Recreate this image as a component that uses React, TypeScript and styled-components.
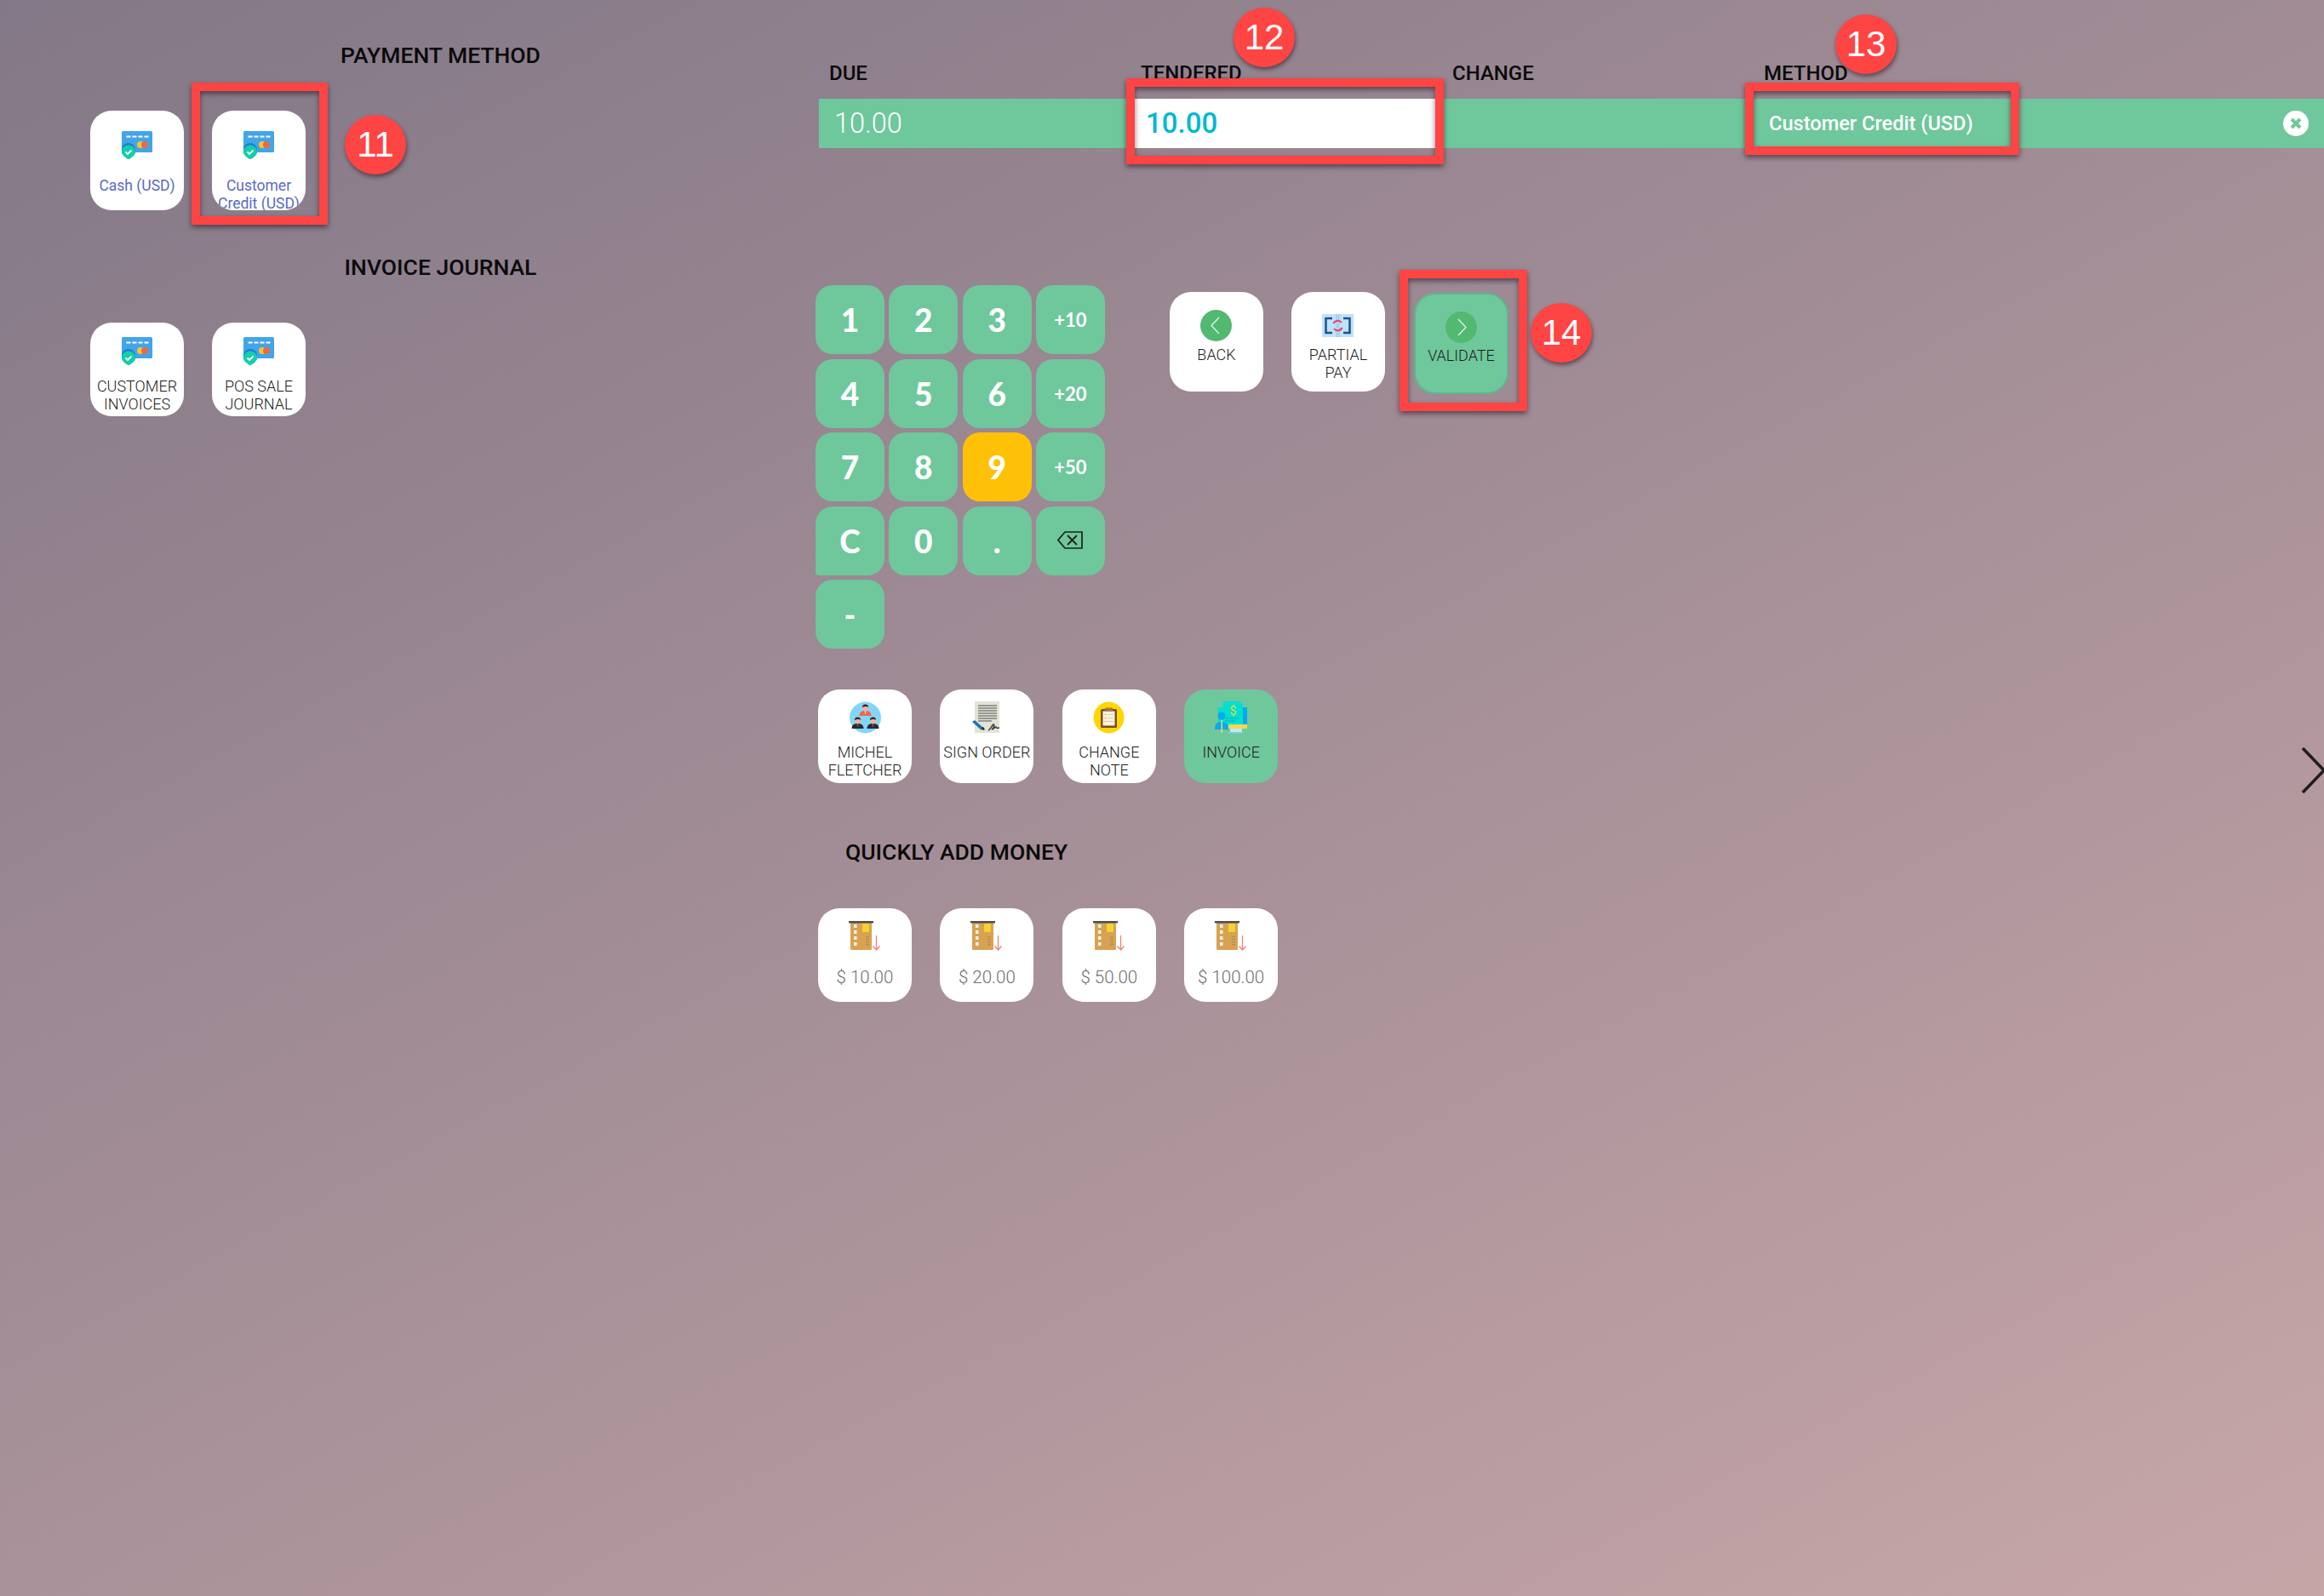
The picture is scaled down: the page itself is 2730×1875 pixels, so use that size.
import React from "react";
import styled, { createGlobalStyle } from "styled-components";

const Global = createGlobalStyle`
  html, body { margin: 0; padding: 0; }
  body { font-family: Roboto, "Liberation Sans", sans-serif; }
`;

const Page = styled.div`
  position: relative;
  display: flex;
  width: 2730px;
  height: 1875px;
  overflow: hidden;
  background: linear-gradient(152deg, #837887 0%, #c7a6a8 100%);
`;

const LeftColumn = styled.section`
  box-sizing: border-box;
  width: 958px;
  flex: none;
  padding: 49px 29px 0 106px;
`;

const RightColumn = styled.section`
  flex: 1;
  min-width: 0;
  padding-top: 73px;
`;

const Heading = styled.h2<{ $center?: boolean; $indent?: number; $after?: number }>`
  margin: 0 0 ${(p) => p.$after ?? 50}px ${(p) => p.$indent ?? 0}px;
  font: 500 26.5px/31px Roboto, sans-serif;
  color: #0a0a0a;
  text-align: ${(p) => (p.$center ? "center" : "left")};
`;

const TileRow = styled.div<{ $gap?: number; $after?: number; $indent?: number }>`
  display: flex;
  gap: ${(p) => p.$gap ?? 33.4}px;
  margin-bottom: ${(p) => p.$after ?? 0}px;
  margin-left: ${(p) => p.$indent ?? 0}px;
`;

const Tile = styled.button<{ $h: number; $w?: number; $top: number; $green?: boolean }>`
  box-sizing: border-box;
  flex: none;
  display: flex;
  flex-direction: column;
  align-items: center;
  width: ${(p) => p.$w ?? 110}px;
  height: ${(p) => p.$h}px;
  padding: ${(p) => p.$top}px 0 0;
  overflow: hidden;
  border: 0;
  border-radius: 25px;
  background: ${(p) => (p.$green ? "#6fc79c" : "#ffffff")};
`;

const TileLabel = styled.span<{ $gap: number; $tone?: string; $size?: number; $weight?: number }>`
  margin-top: ${(p) => p.$gap}px;
  font: ${(p) => p.$weight ?? 300} ${(p) => p.$size ?? 18}px/21px Roboto, sans-serif;
  color: ${(p) => p.$tone ?? "#1c1c1c"};
  text-align: center;
  white-space: pre-line;
`;

const IconSvg = styled.svg`
  display: block;
  flex: none;
`;

const ValidateTile = styled(Tile)`
  margin: 1px 0 0 1px;
  border: 2px solid #5fb58e;
`;

const LabelRow = styled.div`
  display: grid;
  grid-template-columns: repeat(4, 366px);
  margin-left: 4px;
`;

const ColumnLabel = styled.span`
  padding-left: 12px;
  font: 500 24px/26px Roboto, sans-serif;
  color: #0a0a0a;
`;

const PaymentBar = styled.div`
  display: grid;
  grid-template-columns: repeat(4, 366px) 1fr;
  align-items: center;
  height: 58px;
  margin: 17px 0 161px 4px;
  background: #6fc79c;
`;

const DueCell = styled.span`
  padding-left: 18px;
  font: 300 32.5px/58px Roboto, sans-serif;
  color: #fff;
`;

const TenderedCell = styled.span`
  height: 58px;
  margin: 0 8px 0 5px;
  padding-left: 13px;
  background: #fff;
  font: 500 33px/58px Roboto, sans-serif;
  color: #00b8d4;
`;

const MethodCell = styled.span`
  padding-left: 18px;
  font: 500 23.6px/58px Roboto, sans-serif;
  color: #fff;
  white-space: nowrap;
`;

const EmptyCell = styled.span``;

const CloseCell = styled.span`
  display: flex;
  justify-content: flex-end;
  padding-right: 18px;
`;

const PadRow = styled.div`
  display: flex;
  align-items: flex-start;
  margin-bottom: 48px;
`;

const NumPad = styled.div`
  display: grid;
  grid-template-columns: repeat(4, 81px);
  grid-auto-rows: 81px;
  column-gap: 5.33px;
  row-gap: 5.5px;
  margin-right: 76px;
`;

const PadKey = styled.button<{ $small?: boolean; $active?: boolean; $squareCorner?: boolean }>`
  display: flex;
  align-items: center;
  justify-content: center;
  padding: 0;
  border: 0;
  border-radius: 20px;
  ${(p) => (p.$squareCorner ? "border-bottom-left-radius: 4px;" : "")}
  background: ${(p) => (p.$active ? "#ffc107" : "#6fc79c")};
  color: #fff;
  font: ${(p) => (p.$small ? "700 22px" : "900 37px")} Lato, sans-serif;
`;

const ActionRow = styled.div`
  display: flex;
  gap: 33px;
  margin-top: 8px;
`;

const Frame = styled.div<{ $x: number; $y: number; $w: number; $h: number }>`
  position: absolute;
  box-sizing: border-box;
  left: ${(p) => p.$x}px;
  top: ${(p) => p.$y}px;
  width: ${(p) => p.$w}px;
  height: ${(p) => p.$h}px;
  border: 10px solid #ff4444;
  filter: drop-shadow(0 3px 3px rgba(20, 10, 20, 0.55));
  pointer-events: none;
`;

const Badge = styled.div<{ $x: number; $y: number }>`
  position: absolute;
  left: ${(p) => p.$x - 36}px;
  top: ${(p) => p.$y - 35}px;
  display: flex;
  align-items: center;
  justify-content: center;
  width: 72px;
  height: 70px;
  border-radius: 50%;
  background: #ff4444;
  box-shadow: 1px 3px 5px rgba(30, 10, 20, 0.5);
  font: 400 42px/1 "Liberation Sans", Arial, sans-serif;
  color: #fff;
`;

const NextArrow = styled.svg`
  position: absolute;
  right: 0;
  top: 874px;
`;

const CardCheckIcon = () => (
  <IconSvg width="36" height="33" viewBox="0 0 36 33">
    <rect x="0" y="0" width="36" height="25" rx="1.5" fill="#42a5e6" />
    <g fill="#fff">
      <rect x="5.5" y="5.5" width="5" height="2" />
      <rect x="12.5" y="5.5" width="5" height="2" />
      <rect x="19.5" y="5.5" width="5" height="2" />
      <rect x="26.5" y="5.5" width="5" height="2" />
    </g>
    <circle cx="22" cy="16" r="4" fill="#f7c23c" />
    <circle cx="27" cy="16" r="4" fill="#ea6a45" />
    <path d="M0 22a8 8 0 0 1 16 0v2c0 4-4 7-8 9-4-2-8-5-8-9z" fill="#1f7fd6" />
    <path d="M0 24a8 7.5 0 0 1 16 0c0 4-4 7-8 9-4-2-8-5-8-9z" fill="#14cfa8" />
    <path d="M4.5 24.5l2.500 2.500 4.500-4.500" fill="none" stroke="#fff" strokeWidth="1.800" />
  </IconSvg>
);

const Person = ({ x, y, suit, tie }: { x: number; y: number; suit: string; tie: string }) => (
  <g transform={`translate(${x} ${y})`}>
    <path d="M-7 10c0-4.500 3-6 7-6s7 1.500 7 6z" fill={suit} />
    <path d="M-1 4h2L0 9z" fill={tie} />
    <circle cx="0" cy="0" r="3.600" fill="#f3b48e" />
    <path d="M-3.600 0a3.600 3.600 0 0 1 7.200 0c-1.500-1.200-5-1.200-7.200 0z" fill="#26292e" />
  </g>
);

const PeopleIcon = () => (
  <IconSvg width="37" height="38" viewBox="0 0 37 38">
    <circle cx="18.500" cy="19" r="18.500" fill="#82d6fb" />
    <Person x={18.500} y={7} suit="#f2654f" tie="#fbd0c2" />
    <Person x={9.500} y={22} suit="#262b33" tie="#e44d4d" />
    <Person x={27.500} y={22} suit="#262b33" tie="#e44d4d" />
  </IconSvg>
);

const SignIcon = () => (
  <IconSvg width="37" height="38" viewBox="0 0 37 38">
    <rect x="4" y="0" width="29" height="37" fill="#e3e3d5" />
    <g stroke="#7d7f7d" strokeWidth="1.400">
      <path d="M8 5h22M8 8h22M8 11h22M8 14h22M8 17h22M8 20h22M8 23h16" />
    </g>
    <path d="M1 24l3-2 10 9-2 3z" fill="#2272b5" />
    <path d="M12 31l2 3 2-1-2-3z" fill="#222" />
    <path d="M20 34c3-1 4-6 6-7 2 0 0 5-2 6 3-1 3-3 5-3 0 2 2 1 4 1" fill="none" stroke="#3b3f40" strokeWidth="1.500" />
  </IconSvg>
);

const ClipboardIcon = () => (
  <IconSvg width="37" height="38" viewBox="0 0 37 38">
    <ellipse cx="18.500" cy="19" rx="18" ry="18.500" fill="#ffd600" />
    <rect x="9" y="9" width="19" height="22" rx="1.500" fill="#7b4a22" />
    <rect x="11.500" y="11.500" width="14" height="17" fill="#fdf2dc" />
    <rect x="14" y="7.500" width="9" height="4" rx="1" fill="#a8744a" />
    <g stroke="#e8a33d" strokeWidth="1">
      <path d="M13.500 15.500h2M13.500 19.500h2M13.500 23.500h2" />
    </g>
    <g stroke="#d9cdb6" strokeWidth="1">
      <path d="M17 15.500h7M17 19.500h7M17 23.500h7" />
    </g>
  </IconSvg>
);

const InvoiceIcon = () => (
  <IconSvg width="38" height="38" viewBox="0 0 38 38">
    <rect x="26" y="7" width="12" height="24" fill="#0aa6ee" />
    <path d="M10 0h19l4 4v26H10z" fill="#00e0d0" />
    <path d="M4 7h12v20H4z" fill="#00e0d0" />
    <text x="21.500" y="16" fontSize="14" fontFamily="Roboto, sans-serif" textAnchor="middle" fill="#e9d23e">$</text>
    <path d="M12 20h16M12 23h12" stroke="#16a5c8" strokeWidth="1" />
    <circle cx="8" cy="17" r="4.500" fill="#0aa6ee" />
    <path d="M0 33c0-7 3-9 8-9s8 2 8 9z" fill="#0aa6ee" />
    <rect x="7.500" y="22" width="1.500" height="15" fill="#f5d94e" />
    <rect x="16" y="27" width="22" height="5" fill="#f6d84f" />
    <path d="M18 32h14v4H18z" fill="#bfe8f5" />
    <path d="M15 36h19v1.500H15z" fill="#7ccbe0" />
  </IconSvg>
);

const PartialIcon = () => (
  <IconSvg width="37" height="27" viewBox="0 0 37 27">
    <rect width="37" height="27" fill="#c0e2f8" />
    <rect x="16" y="0" width="5" height="27" fill="#a8d4f2" />
    <path d="M12 5H4.500v17H12M25 5h7.500v17H25" fill="none" stroke="#1d4f96" strokeWidth="2.500" />
    <path d="M13.500 11a5.500 5.500 0 0 1 9.500-1M23.500 16a5.500 5.500 0 0 1-9.500 1" fill="none" stroke="#ef3f5d" strokeWidth="2" />
  </IconSvg>
);

const ChevronCircle = ({ dir }: { dir: "left" | "right" }) => (
  <IconSvg width="37" height="37" viewBox="0 0 37 37">
    <circle cx="18.500" cy="18.500" r="18.500" fill="#52b970" />
    <path
      d={dir === "left" ? "M22 9l-9 9.500 9 9.500" : "M15 9l9 9.500-9 9.500"}
      fill="none"
      stroke="#e8f6ee"
      strokeWidth="1.200"
    />
  </IconSvg>
);

const AtmCardIcon = () => (
  <IconSvg width="38" height="35" viewBox="0 0 38 35">
    <rect x="2" y="1" width="25" height="33" rx="1" fill="#d8a253" />
    <rect x="0" y="0" width="29" height="2.500" fill="#4b4f55" />
    <g fill="#f5f0e6">
      <rect x="6" y="4" width="3.500" height="4" />
      <rect x="6" y="11" width="3.500" height="4" />
      <rect x="6" y="18" width="3.500" height="4" />
      <rect x="6" y="25" width="3.500" height="4" />
    </g>
    <rect x="16" y="3" width="8" height="10" rx="1" fill="#f6d22e" />
    <path d="M21 18v11M23 18v11" stroke="#a67b3c" strokeWidth="1" strokeDasharray="1.500 1.500" />
    <path d="M32.500 17v17M28.500 29.500l4 4.500 4-4.500" fill="none" stroke="#f2807a" strokeWidth="1.300" />
  </IconSvg>
);

const BackspaceIcon = () => (
  <IconSvg width="30" height="23" viewBox="0 0 30 23">
    <path d="M9 1h20v19H9L1 10.500z" fill="none" stroke="#14251d" strokeWidth="1.700" />
    <path d="M12 5l11 11M23 5L12 16" fill="none" stroke="#14251d" strokeWidth="1.800" />
  </IconSvg>
);

const CloseIcon = () => (
  <IconSvg width="30" height="30" viewBox="0 0 30 30">
    <circle cx="15" cy="15" r="15" fill="#fff" />
    <path d="M10 10l10 10M20 10L10 20" stroke="#6fc79c" strokeWidth="4" />
  </IconSvg>
);

const keys: { t: React.ReactNode; small?: boolean; active?: boolean; square?: boolean }[] = [
  { t: "1" }, { t: "2" }, { t: "3" }, { t: "+10", small: true },
  { t: "4" }, { t: "5" }, { t: "6" }, { t: "+20", small: true },
  { t: "7" }, { t: "8" }, { t: "9", active: true }, { t: "+50", small: true },
  { t: "C", square: true }, { t: "0" }, { t: "." }, { t: <BackspaceIcon /> },
  { t: "-" },
];

const indigo = "#5a6ac6";
const grey = "#6f6f6f";

export default function App() {
  return (
    <Page>
      <Global />
      <LeftColumn>
        <Heading $center>PAYMENT METHOD</Heading>
        <TileRow $gap={33} $after={51}>
          <Tile $h={117} $top={24}>
            <CardCheckIcon />
            <TileLabel $gap={21} $tone={indigo} $size={17.5} $weight={400}>Cash (USD)</TileLabel>
          </Tile>
          <Tile $h={117} $top={24}>
            <CardCheckIcon />
            <TileLabel $gap={21} $tone={indigo} $size={17.5} $weight={400}>{"Customer\nCredit (USD)"}</TileLabel>
          </Tile>
        </TileRow>
        <Heading $center>INVOICE JOURNAL</Heading>
        <TileRow $gap={33}>
          <Tile $h={110} $top={17}>
            <CardCheckIcon />
            <TileLabel $gap={14}>{"CUSTOMER\nINVOICES"}</TileLabel>
          </Tile>
          <Tile $h={110} $top={17}>
            <CardCheckIcon />
            <TileLabel $gap={14}>{"POS SALE\nJOURNAL"}</TileLabel>
          </Tile>
        </TileRow>
      </LeftColumn>

      <RightColumn>
        <LabelRow>
          <ColumnLabel>DUE</ColumnLabel>
          <ColumnLabel>TENDERED</ColumnLabel>
          <ColumnLabel>CHANGE</ColumnLabel>
          <ColumnLabel>METHOD</ColumnLabel>
        </LabelRow>
        <PaymentBar>
          <DueCell>10.00</DueCell>
          <TenderedCell>10.00</TenderedCell>
          <EmptyCell />
          <MethodCell>Customer Credit (USD)</MethodCell>
          <CloseCell><CloseIcon /></CloseCell>
        </PaymentBar>

        <PadRow>
          <NumPad>
            {keys.map((k, i) => (
              <PadKey key={i} $small={k.small} $active={k.active} $squareCorner={k.square}>{k.t}</PadKey>
            ))}
          </NumPad>
          <ActionRow>
            <Tile $h={117} $w={110} $top={21}>
              <ChevronCircle dir="left" />
              <TileLabel $gap={5}>BACK</TileLabel>
            </Tile>
            <Tile $h={117} $top={26}>
              <PartialIcon />
              <TileLabel $gap={10}>{"PARTIAL\nPAY"}</TileLabel>
            </Tile>
            <ValidateTile $h={119} $w={111} $top={20} $green>
              <ChevronCircle dir="right" />
              <TileLabel $gap={4}>VALIDATE</TileLabel>
            </ValidateTile>
          </ActionRow>
        </PadRow>

        <TileRow $after={65} $indent={3}>
          <Tile $h={110} $top={14}>
            <PeopleIcon />
            <TileLabel $gap={11}>{"MICHEL\nFLETCHER"}</TileLabel>
          </Tile>
          <Tile $h={110} $top={14}>
            <SignIcon />
            <TileLabel $gap={11}>SIGN ORDER</TileLabel>
          </Tile>
          <Tile $h={110} $top={14}>
            <ClipboardIcon />
            <TileLabel $gap={11}>{"CHANGE\nNOTE"}</TileLabel>
          </Tile>
          <Tile $h={110} $top={14} $green>
            <InvoiceIcon />
            <TileLabel $gap={11}>INVOICE</TileLabel>
          </Tile>
        </TileRow>

        <Heading $indent={35} $after={51}>QUICKLY ADD MONEY</Heading>

        <TileRow $indent={3}>
          {["$ 10.00", "$ 20.00", "$ 50.00", "$ 100.00"].map((v) => (
            <Tile key={v} $h={110} $top={15}>
              <AtmCardIcon />
              <TileLabel $gap={21} $tone={grey} $size={20.5}>{v}</TileLabel>
            </Tile>
          ))}
        </TileRow>
      </RightColumn>

      <Frame $x={225} $y={97} $w={160} $h={167} />
      <Frame $x={1323} $y={92} $w={373} $h={101} />
      <Frame $x={2050} $y={97} $w={322} $h={85} />
      <Frame $x={1644} $y={317} $w={150} $h={166} />
      <Badge $x={441} $y={170}>11</Badge>
      <Badge $x={1485} $y={44}>12</Badge>
      <Badge $x={2192} $y={52}>13</Badge>
      <Badge $x={1834} $y={391}>14</Badge>

      <NextArrow width="28" height="62" viewBox="0 0 28 62">
        <path d="M3 5l25 26L3 57" fill="none" stroke="#1d1d1d" strokeWidth="3.500" />
      </NextArrow>
    </Page>
  );
}
